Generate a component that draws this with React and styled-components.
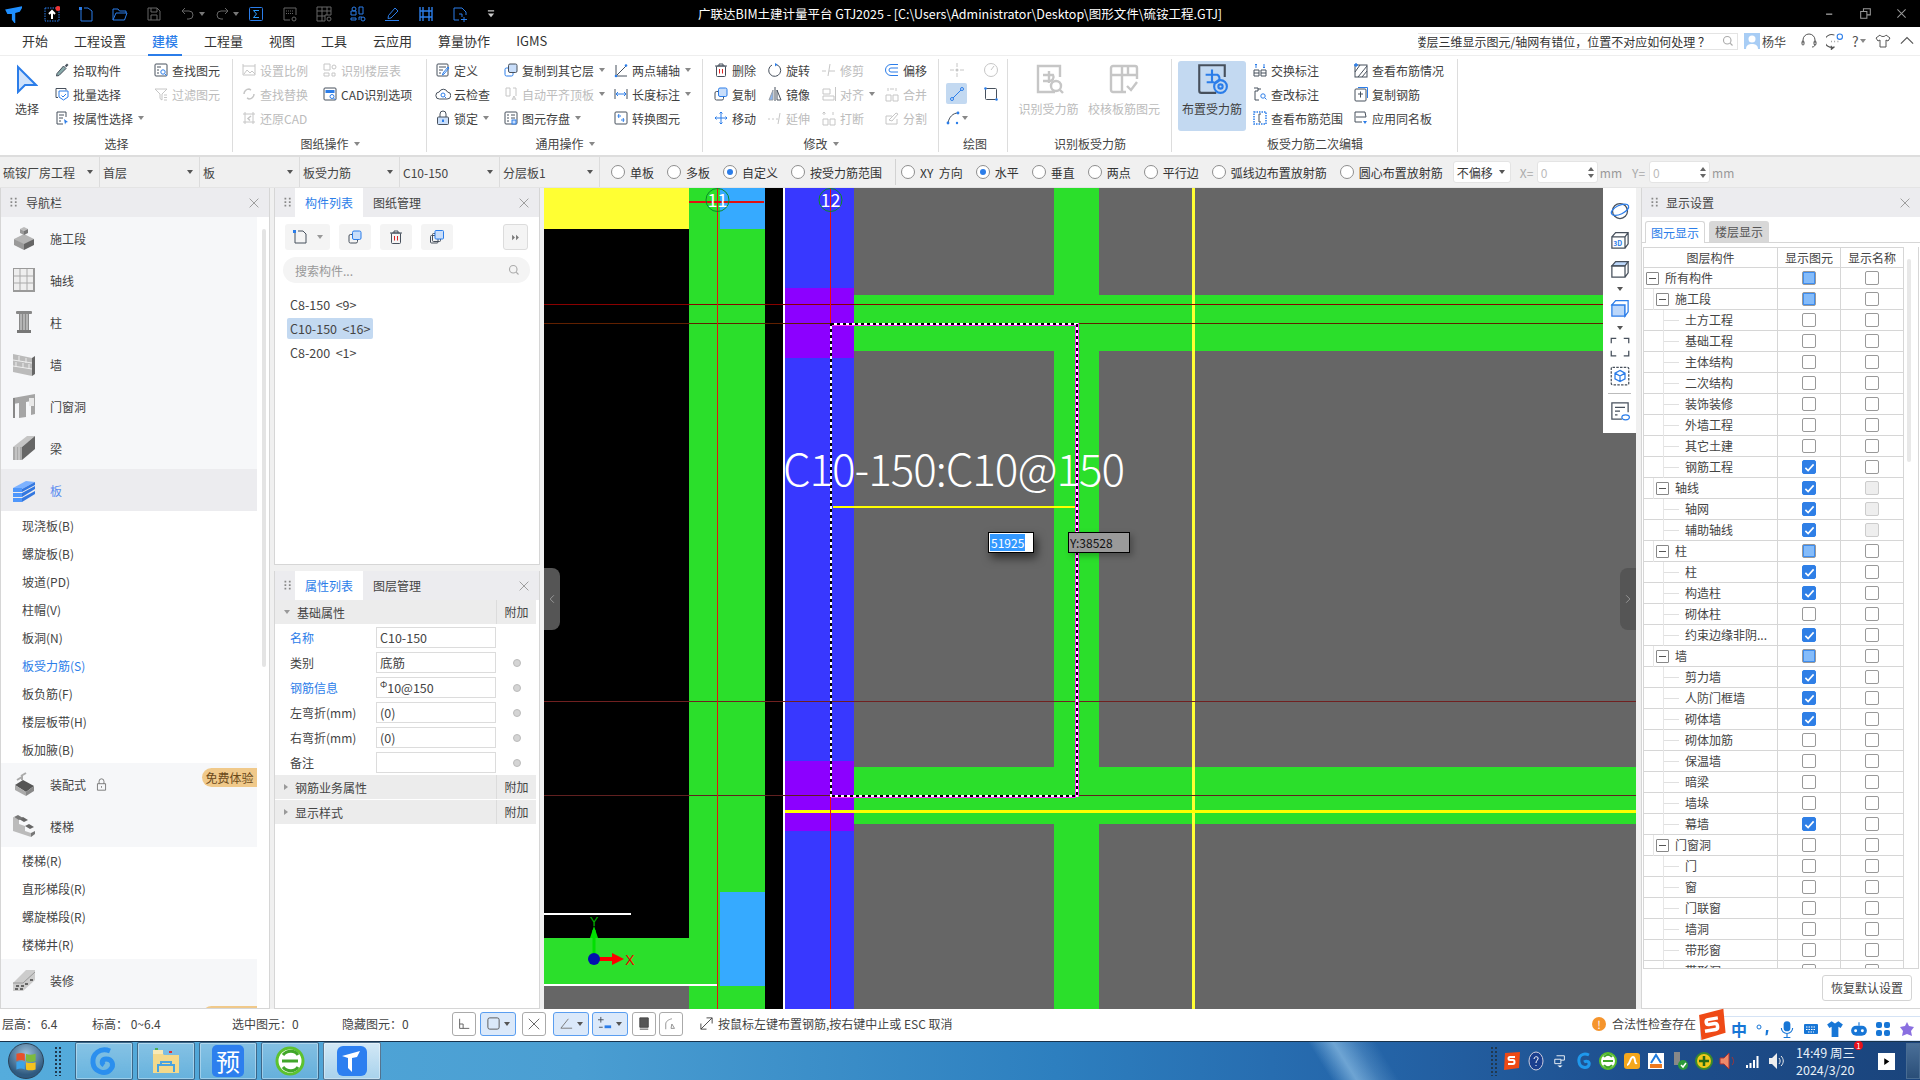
import React from "react";
import styled, { createGlobalStyle } from "styled-components";

const DK = "#47505c";
const BL = "#2b7de9";
const LB = "#c9defa";
const GR = "#c6c6c6";

const Global = createGlobalStyle`
  html, body { margin: 0; padding: 0; background: #f0f0f0; }
  body { font-family: "Noto Sans CJK SC", "Liberation Sans", sans-serif; font-size: 12px; color: #3a3a3a; }
  * { box-sizing: border-box; }
`;

// ---------- icons ----------
const icons = {
  pick: <><path d="M13 1.5l1.5 1.5-2.2 2.2-1.5-1.5z" fill={DK} /><path d="M9.5 4l2.5 2.5L5 13.5l-2.5.5.5-2.5z" fill="#8aa" stroke={DK} /></>,
  batch: <><path d="M2 2.5h10v2M2 2.5v9h2" stroke={DK} /><path d="M5 5h9v6l-4.5 3L5 11z" stroke={BL} /><path d="M7.5 9.5l1.5 1.5 3-3" stroke={BL} /></>,
  attr: <><path d="M12 7V2H3v12h6" stroke={DK} /><path d="M5 5h5M5 8h4M5 11h2" stroke={DK} /><path d="M10 9l4 3-2 .5-1 2z" fill={BL} /></>,
  find: <><rect x="2" y="2" width="12" height="12" rx="1" stroke={DK} /><path d="M4 5h4M4 8h2M4 11h2" stroke={DK} /><circle cx="10" cy="10" r="2.2" stroke={BL} /><path d="M12 12l2 2" stroke={BL} /></>,
  filter: <path d="M2 3h12L9 8v6l-2-1.5V8zM11 9h3M11 11.5h3M11 14h3" stroke={GR} />,
  scale: <><path d="M2 4h12v9H2z" stroke={GR} /><path d="M3 12l3-4 3 3 2-2 3 3" stroke={GR} /><path d="M2 2v2M14 2v2" stroke={GR} /></>,
  floorTbl: <><path d="M2 8V2h6v6zM2 14v-3h5v3zM10 14v-3h3v3z" stroke={GR} /><circle cx="12" cy="5" r="2" stroke={GR} /></>,
  replace: <><path d="M3 8a5 5 0 0 1 5-5l2 1M13 8a5 5 0 0 1-5 5l-2-1" stroke={GR} strokeWidth="1.5" /></>,
  cadOpt: <><rect x="2" y="2" width="12" height="12" rx="1" stroke={DK} /><rect x="3.5" y="4" width="9" height="3" fill={BL} /><circle cx="10" cy="10.5" r="2" stroke={BL} /><path d="M11.5 12l2 2" stroke={BL} /></>,
  restore: <><path d="M2 4h12M2 12h12M4 2v12M12 2v12" stroke={GR} /><path d="M10 6L7 8.5l2 2" stroke={GR} strokeWidth="1.5" /></>,
  define: <><rect x="2" y="2" width="11" height="12" rx="1" stroke={DK} /><path d="M4 5h7M4 8h4M4 11h2" stroke={DK} /><path d="M14 6l-5 6-1.500 1 .5-2 5-6z" stroke={BL} /></>,
  cloud: <><path d="M4.500 13a3.500 3.500 0 0 1-.3-7A4.500 4.500 0 0 1 12.500 6a3.500 3.500 0 0 1-.5 7z" stroke={DK} /><circle cx="8" cy="9" r="2" stroke={BL} /><path d="M9.500 10.500l1.500 1.500" stroke={BL} /></>,
  lock: <><path d="M5 7V4a3 3 0 0 1 6 0v3" stroke={DK} /><rect x="2.500" y="7" width="11" height="7.500" rx="1" fill={LB} stroke={DK} /><path d="M8 9.500v2.500" stroke={BL} strokeWidth="2" /></>,
  copyLayer: <><rect x="2" y="6" width="8" height="8" rx="1.500" stroke={BL} /><rect x="5.500" y="2" width="8.500" height="8.500" rx="1.500" fill={LB} stroke={DK} /></>,
  align: <><path d="M3 2h4v8H3zM10 2h3v8" stroke={GR} /><path d="M9 14l2-4 2 4M10 13h2" stroke={GR} /></>,
  store: <><rect x="2" y="2" width="12" height="12" rx="1" stroke={DK} /><path d="M4 5h2M8 5h4M4 8h2M8 8h4M4 11h2" stroke={DK} /><rect x="9" y="10" width="4" height="4" fill={LB} stroke={BL} /></>,
  axis2: <><path d="M3 3v11h11" stroke={DK} /><path d="M3 14L14 3" stroke={DK} /><circle cx="13" cy="3.500" r="1.300" fill={BL} /><circle cx="3" cy="14" r="1.300" fill={BL} /></>,
  dim: <><path d="M2 3v10M14 3v10" stroke={DK} /><path d="M3 8h10M5 6l-2 2 2 2M11 6l2 2-2 2" stroke={BL} /></>,
  convert: <><rect x="2" y="2" width="12" height="12" rx="1" stroke={DK} /><path d="M5 6h3M8 10h3M6 4l-1 2 1 2M10 8l1 2-1 2" stroke={BL} /></>,
  del: <><path d="M2 4h12M6 4V2h4v2" stroke={DK} /><rect x="3.500" y="4" width="9" height="10.500" rx="1" stroke={DK} /><path d="M6.500 7v4.500M9.500 7v4.500" stroke="#d22" /></>,
  copy: <><rect x="2" y="5.500" width="8.500" height="8.500" rx="1.500" stroke={DK} /><rect x="5.500" y="2" width="8.500" height="8.500" rx="1.500" fill={LB} stroke={BL} /></>,
  move: <path d="M8 2v12M2 8h12M8 2L6.500 3.500M8 2l1.500 1.500M8 14l-1.500-1.500M8 14l1.500-1.500M2 8l1.500-1.500M2 8l1.500 1.500M14 8l-1.500-1.500M14 8l-1.500 1.500" stroke={BL} />,
  rotate: <><path d="M9 2.500A6 6 0 1 1 5 3" stroke={DK} /><path d="M8 1l2.500 1.500L8 4.500z" fill={BL} /></>,
  mirror: <><path d="M8 1v14" stroke={DK} /><path d="M6 4L2 14h4z" fill={BL} opacity=".55" stroke={DK} /><path d="M10 4l4 10h-4z" stroke={DK} /></>,
  extend: <path d="M1 9h2M5 9h2M9 9h2M13 3l-2 11" stroke={GR} />,
  trim: <path d="M1 9h4M8 9h6M9 2L7 14" stroke={GR} />,
  alignR: <><path d="M2 3h7v5H2zM2 10h11v4H2z" stroke={GR} /><path d="M14.500 1v14" stroke={GR} /></>,
  brk: <><path d="M2 15V9h5v6zM9 15V9h5v6z" stroke={GR} /><path d="M3 2v3M1.500 3.500L3 2l1.500 1.500M12 2v3" stroke={GR} /></>,
  offset: <path d="M14 2.500H7a5.500 5.500 0 0 0 0 11h7M14 6H7a2 2 0 0 0 0 4h7" stroke={BL} />,
  merge: <><path d="M2 15V9h5v6zM9 15V9h5v6z" stroke={GR} /><path d="M4 2v3M12 2v3M6 3h4" stroke={GR} /></>,
  split: <><path d="M13 9v5H2V6h6" stroke={GR} /><path d="M5 10l7-7 2 1-6 7z" stroke={GR} /></>,
  point: <><path d="M8 1v4M8 11v4M1 8h4M11 8h4" stroke={GR} /><circle cx="8" cy="8" r="1.500" fill={GR} /></>,
  measure: <><circle cx="8" cy="8" r="6.500" stroke={GR} /><path d="M8 8l3-4" stroke={GR} /></>,
  line: <><path d="M3 13L13 3" stroke={BL} /><circle cx="13" cy="3" r="1.500" fill={LB} stroke={BL} /><circle cx="3" cy="13" r="1.500" fill={LB} stroke={BL} /></>,
  rect: <><rect x="2.500" y="2.500" width="11" height="11" rx="1" stroke={DK} /><circle cx="2.500" cy="2.500" r="1.300" fill={BL} /><circle cx="13.500" cy="13.500" r="1.300" fill={BL} /></>,
  arc: <><path d="M3 13C4 7 8 3 13 3" stroke={DK} /><circle cx="13" cy="3" r="1.400" fill={BL} /><circle cx="3" cy="13" r="1.400" fill={BL} /><circle cx="12" cy="13" r="1.200" fill={BL} /></>,
  exch: <><path d="M2 8h5v6H2zM9 8h5v6H9zM2 11h5M9 11h5" stroke={DK} /><path d="M4 2v4M3 3l1-1 1 1M12 2v4M11 5l1 1 1-1" stroke={BL} /></>,
  chk: <><path d="M2 2h4v3H3v9h4M6 3h3" stroke={DK} /><circle cx="11" cy="10" r="2.200" stroke={BL} /><path d="M13 12l1.500 1.500" stroke={BL} /></>,
  viewInfo: <><rect x="2" y="2" width="12" height="12" stroke={BL} strokeDasharray="1.500 1" strokeWidth="1.500" /><path d="M9 4H7v8h2" stroke={DK} /></>,
  view: <><rect x="2" y="3" width="12" height="12" stroke={DK} /><path d="M2 10l5-7M5 15L14 4M9 15l5-6" stroke={DK} /><path d="M3 1v4M1 3h4" stroke={BL} strokeWidth="1.300" /></>,
  copyRebar: <><rect x="2" y="3" width="11" height="12" rx="1" stroke={DK} /><path d="M5 1.500h9.500V12" stroke={BL} /><path d="M5 8h5M7.500 5.500v6" stroke={DK} /></>,
  apply: <><path d="M2 12V2h10l1 5H3" stroke={DK} /><path d="M2 12h7" stroke={DK} /><path d="M10 11h4l-2 3z" fill={BL} /></>,
};

const Svg = ({ vb = "0 0 16 16", s = 16, w, h, children, stroke = "none", fill = "none", sw = 1 }) => (
  <svg viewBox={vb} width={w || s} height={h || s} fill={fill} stroke={stroke} strokeWidth={sw} style={{ display: "block", flex: "none" }}>
    {children}
  </svg>
);

const Caret = styled.span`
  display: inline-block;
  flex: none;
  width: 0;
  height: 0;
  border-left: 3px solid transparent;
  border-right: 3px solid transparent;
  border-top: 4px solid ${(p) => p.$c || "#888"};
  margin-left: ${(p) => p.$ml ?? 5}px;
`;

const Grip = () => (
  <Svg s={14}>
    {[3, 7, 11].map((y) => (
      <React.Fragment key={y}>
        <rect x="4" y={y - 1} width="2" height="2" fill="#888" />
        <rect x="9" y={y - 1} width="2" height="2" fill="#888" />
      </React.Fragment>
    ))}
  </Svg>
);
const CloseX = () => (
  <Svg s={10} stroke="#999">
    <path d="M1 1l14 14M15 1L1 15" strokeWidth="1.500" />
  </Svg>
);

// ---------- title bar ----------
const Shell = styled.div`
  width: 1920px;
  height: 1080px;
  overflow: hidden;
  display: flex;
  flex-direction: column;
`;
const TitleBar = styled.div`
  height: 27px;
  flex: none;
  background: #000;
  color: #fff;
  display: grid;
  grid-template-columns: 698px 1fr auto;
  align-items: center;
  font-size: 12.500px;
`;
const Quick = styled.div`
  display: flex;
  align-items: center;
  padding-left: 4px;
`;
const QuickSlot = styled.div`
  width: 34px;
  display: flex;
  align-items: center;
  position: relative;
  &:first-child { width: 40px; }
`;
const WinBtns = styled.div`
  display: flex;
  gap: 25px;
  padding-right: 13px;
`;
const Qs = (p) => <Svg s={16} stroke={p.c} {...p} />;

const quickIcons = [
  <Svg s={18} key="logo" fill="#1f8fff"><path d="M1 4l16-3-3 5-4 1v10l-3-4V8L3 8z" /></Svg>,
  <Qs c={BL} key="up"><rect x="1" y="2" width="14" height="13" strokeDasharray="1.500 1" /><path d="M8 13V6M5 8l3-3 3 3" stroke="#fff" strokeWidth="2" /><circle cx="14" cy="2.500" r="2.500" fill="#e33" stroke="none" /></Qs>,
  <Qs c={BL} key="new"><path d="M3 4v11h11V5l-4-3H6" /><rect x="1" y="1" width="3" height="3" fill={BL} stroke="none" /></Qs>,
  <Qs c={BL} key="open"><path d="M1 14V3h5l1.500 2H14v2M1 14h11.500L15 7H4z" /></Qs>,
  <Qs c="#666" key="save"><path d="M2 2h9l3 3v9H2zM5 2v4h6V2M5 14V9h6v5" /></Qs>,
  <React.Fragment key="undo"><Qs c="#666"><path d="M5 2L2 5l3 3M2 5h7a4 4 0 0 1 0 8H7" /></Qs><Caret $c="#777" $ml={3} /></React.Fragment>,
  <React.Fragment key="redo"><Qs c="#666"><path d="M11 2l3 3-3 3M14 5H7a4 4 0 0 0 0 8h2" /></Qs><Caret $c="#777" $ml={3} /></React.Fragment>,
  <Qs c={BL} key="sum"><rect x="1.500" y="1.500" width="13" height="13" rx="1" /><path d="M11 4.500H5.500L8.500 8l-3 3.500H11" stroke="#2a9cff" /></Qs>,
  <Qs c="#666" key="q1"><path d="M2 14V2h12v7M2 14h6" /><path d="M4 5h8M4 7.500h8" strokeDasharray="1 1" /><circle cx="12" cy="13" r="2" /></Qs>,
  <Qs c="#666" key="q2"><path d="M1 1h14v8H9v6H1zM1 5h14M6 1v14M11 1v8M1 10h8" /><circle cx="13" cy="13" r="2" /></Qs>,
  <Qs c={BL} key="q3"><path d="M1 9V5h5v4zM1 14v-2h5v2zM9 14v-3h3" /><circle cx="4" cy="3" r="2" /><path d="M9 1h4v7H9z" /><circle cx="13" cy="13" r="2" /></Qs>,
  <Qs c={BL} key="q4"><path d="M11 2l3 3-7 7-3 .5.500-3zM1 14.500h14" /></Qs>,
  <Qs c={BL} key="q5"><path d="M2 1v14M14 1v14M5 1v14M11 1v14M2 5h12M2 11h12" strokeWidth="1.400" /></Qs>,
  <Qs c={BL} key="q6"><path d="M2 14V2h8l4 4v3M2 14h5M12 11v5M9 13.500h6M7 8h3v3" /></Qs>,
  <Svg w={10} h={10} key="more" fill="#ccc"><path d="M3 2h10v2H3zM3 7h10l-5 6z" /></Svg>,
];

// ---------- menu ----------
const MenuBar = styled.div`
  height: 28px;
  flex: none;
  background: #fff;
  display: flex;
  align-items: center;
  padding-left: 22px;
  gap: 26px;
  font-size: 13px;
`;
const MenuItem = styled.div`
  position: relative;
  line-height: 28px;
  color: ${(p) => (p.$on ? BL : "#333")};
  font-weight: ${(p) => (p.$on ? 500 : 400)};
  &::after {
    content: "";
    position: absolute;
    left: -4px;
    right: -4px;
    bottom: -1px;
    height: 2px;
    background: ${(p) => (p.$on ? BL : "transparent")};
  }
`;
const AskWrap = styled.div`
  margin-left: auto;
  display: flex;
  align-items: center;
  height: 28px;
  padding-right: 6px;
`;
const AskBox = styled.div`
  width: 320px;
  height: 17px;
  margin-right: 6px;
  background: #fff;
  border: 1px solid #e4e4e4;
  border-left: none;
  display: flex;
  align-items: center;
  padding-right: 3px;
  font-size: 12px;
  color: #333;
`;
const AskText = styled.div`
  flex: 1;
  overflow: hidden;
  white-space: nowrap;
  display: flex;
  justify-content: flex-end;
  padding-right: 12px;
`;
const Avatar = styled.div`
  width: 16px;
  height: 16px;
  background: #a8cdf5;
  margin-right: 2px;
`;
const UserName = styled.span`
  font-size: 12px;
  margin-right: 15px;
  color: #444;
`;
const HelpIcons = styled.div`
  display: flex;
  align-items: center;
  gap: 9px;
`;

// ---------- ribbon ----------
const Ribbon = styled.div`
  height: 102px;
  flex: none;
  background: #fff;
  border-top: 1px solid #eee;
  border-bottom: 2px solid #ddd;
  display: flex;
`;
const Group = styled.div`
  width: ${(p) => p.$w}px;
  flex: none;
  display: flex;
  flex-direction: column;
  position: relative;
  padding-top: 2px;
  &::after {
    content: "";
    position: absolute;
    right: 0;
    top: 3px;
    bottom: 3px;
    width: 1px;
    background: #ddd;
  }
`;
const GroupBody = styled.div`
  height: 72px;
  display: flex;
  padding-left: ${(p) => p.$pl || 0}px;
`;
const GroupLabel = styled.div`
  margin-top: 4px;
  height: 20px;
  line-height: 20px;
  padding-left: ${(p) => p.$pl || 0}px;
  display: flex;
  align-items: center;
  justify-content: center;
  color: #444;
`;
const Col = styled.div`
  width: ${(p) => p.$w}px;
  flex: none;
`;
const Item = styled.div`
  height: 24px;
  display: flex;
  align-items: center;
  gap: 3px;
  white-space: nowrap;
  color: ${(p) => (p.$off ? "#bcbcbc" : "#3f3f3f")};
`;
const BigBtn = styled.div`
  width: ${(p) => p.$w}px;
  height: 70px;
  margin-top: 3px;
  margin-right: ${(p) => p.$mr || 0}px;
  flex: none;
  display: flex;
  flex-direction: column;
  align-items: center;
  padding-top: 1px;
  white-space: nowrap;
  border-radius: 3px;
  background: ${(p) => (p.$on ? "#c3d9f1" : "transparent")};
  color: ${(p) => (p.$off ? "#bcbcbc" : "#3f3f3f")};
`;
const BigIcon = styled.div`
  height: 34px;
  display: flex;
  align-items: center;
  margin-bottom: 4px;
`;
const DrawGrid = styled.div`
  display: grid;
  grid-template-columns: 34px 34px;
  grid-auto-rows: 24px;
  padding-left: 7px;
`;
const DrawCell = styled.div`
  width: 21px;
  height: 21px;
  margin-top: 1px;
  display: flex;
  align-items: center;
  justify-content: center;
  border-radius: 2px;
  background: ${(p) => (p.$on ? "#c3d9f1" : "transparent")};
`;

const Ri = ({ i, t, off, m }) => (
  <Item $off={off}>
    <Svg>{icons[i]}</Svg>
    {t}
    {m && <Caret $ml={2} />}
  </Item>
);

// ---------- option bar ----------
const OptionBar = styled.div`
  height: 31px;
  flex: none;
  background: #f0f0f0;
  display: flex;
  align-items: center;
  border-bottom: 1px solid #e4e4e4;
`;
const SelCell = styled.div`
  width: 100px;
  height: 30px;
  flex: none;
  display: flex;
  align-items: center;
  justify-content: space-between;
  padding: 0 6px 0 3px;
  border-right: 1px solid #dcdcdc;
  color: #444;
`;
const OptGap = styled.span`
  width: 11px;
  flex: none;
`;
const RadioWrap = styled.div`
  display: flex;
  align-items: center;
  gap: 5px;
  margin-right: 13px;
  white-space: pre;
  color: #333;
`;
const RadioDot = styled.span`
  width: 14px;
  height: 14px;
  border-radius: 50%;
  border: 1px solid #8e8e8e;
  background: #fff;
  display: flex;
  align-items: center;
  justify-content: center;
  &::after {
    content: "";
    width: 6px;
    height: 6px;
    border-radius: 50%;
    background: ${(p) => (p.$on ? BL : "transparent")};
  }
`;
const VSep = styled.div`
  width: 1px;
  height: 26px;
  background: #d2d2d2;
  margin-right: 5px;
`;
const OffsetSel = styled.div`
  width: 58px;
  height: 22px;
  background: #fff;
  border-radius: 3px;
  border: 1px solid #e4e4e4;
  display: flex;
  align-items: center;
  justify-content: space-between;
  padding: 0 5px 0 3px;
  margin: 0 9px 0 -3px;
`;
const CoordLabel = styled.span`
  color: #aaa;
  width: 17px;
`;
const CoordInput = styled.div`
  width: 61px;
  height: 22px;
  background: #fff;
  border: 1px solid #e4e4e4;
  border-radius: 3px;
  display: flex;
  align-items: center;
  justify-content: space-between;
  padding: 0 3px;
  color: #bbb;
`;
const Unit = styled.span`
  color: #999;
  margin: 0 10px 0 2px;
`;
const Spin = styled.div`
  display: flex;
  flex-direction: column;
  gap: 3px;
`;
const SpinUp = styled.span`
  width: 0;
  height: 0;
  border-left: 3px solid transparent;
  border-right: 3px solid transparent;
  border-bottom: 4px solid #666;
`;

// ---------- main area ----------
const Main = styled.div`
  height: 821px;
  flex: none;
  display: flex;
  background: #f0f0f0;
`;
const NavPanel = styled.div`
  width: 270px;
  flex: none;
  background: #fff;
  border: 1px solid #d6d6d6;
  border-top: none;
  display: flex;
  flex-direction: column;
  overflow: hidden;
  position: relative;
`;
const PanelHead = styled.div`
  height: 29px;
  flex: none;
  background: #ececef;
  display: flex;
  align-items: center;
  padding: 0 10px 0 6px;
  gap: ${(p) => p.$gap ?? 5}px;
  color: #444;
`;
const PanelClose = styled.div`
  margin-left: auto;
`;
const NavRow = styled.div`
  width: 256px;
  height: 42px;
  flex: none;
  display: flex;
  align-items: center;
  gap: 14px;
  padding-left: 11px;
  position: relative;
  background: ${(p) => (p.$on ? "#ececef" : "#f6f7f9")};
  color: ${(p) => (p.$on ? "#5a8df0" : "#444")};
`;
const NavLock = styled.span`
  margin-left: -5px;
`;
const NavSub = styled.div`
  height: 28px;
  flex: none;
  line-height: 28px;
  padding-left: 21px;
  margin-top: ${(p) => (p.$first ? 1 : 0)}px;
  margin-bottom: ${(p) => (p.$last ? -1 : 0)}px;
  color: ${(p) => (p.$on ? BL : "#444")};
`;
const FreeBadge = styled.div`
  position: absolute;
  right: 0;
  top: ${(p) => p.$top ?? 5}px;
  width: 55px;
  height: 19px;
  line-height: 19px;
  text-align: center;
  border-radius: 10px 0 0 10px;
  background: #f0c98a;
  color: #6b4a1a;
  font-size: 12px;
`;
const NavScroll = styled.div`
  position: absolute;
  right: 3px;
  top: 41px;
  width: 4px;
  height: 438px;
  border-radius: 2px;
  background: #e4e4e4;
`;
const MidCol = styled.div`
  width: 266px;
  margin-left: 4px;
  flex: none;
  display: flex;
  flex-direction: column;
  gap: 6px;
`;
const MidPanel = styled.div`
  flex: ${(p) => (p.$h ? "none" : 1)};
  height: ${(p) => (p.$h ? `${p.$h}px` : "auto")};
  background: #fff;
  border: 1px solid #d6d6d6;
  border-top: none;
  display: flex;
  flex-direction: column;
`;
const TabHead = styled.div`
  height: 29px;
  flex: none;
  background: #ececef;
  display: flex;
  align-items: center;
  padding-left: 6px;
  padding-right: 10px;
`;
const PanelTab = styled.div`
  height: 29px;
  width: 68px;
  text-align: center;
  line-height: 29px;
  background: ${(p) => (p.$on ? "#fff" : "transparent")};
  color: ${(p) => (p.$on ? BL : "#444")};
`;
const Tools = styled.div`
  display: flex;
  gap: 9px;
  padding: 7px 0 0 10px;
`;
const ToolBtn = styled.div`
  width: ${(p) => p.$w || 32}px;
  height: 26px;
  background: #f4f4f4;
  border-radius: 3px;
  display: flex;
  align-items: center;
  justify-content: center;
  gap: 6px;
  margin-left: ${(p) => p.$ml || 0}px;
  border: ${(p) => (p.$bd ? "1px solid #dcdcdc" : "none")};
`;
const SearchBox = styled.div`
  margin: 7px 9px 0 8px;
  height: 26px;
  border-radius: 13px;
  background: #f4f4f4;
  display: flex;
  align-items: center;
  justify-content: space-between;
  padding: 0 10px 0 12px;
  color: #999;
`;
const CompList = styled.div`
  display: flex;
  flex-direction: column;
  align-items: flex-start;
  padding: 11px 0 0 12px;
  gap: 3px;
`;
const CompItem = styled.div`
  height: 21px;
  line-height: 21px;
  padding: 0 3px;
  border-radius: 2px;
  font-size: 12.500px;
  white-space: pre;
  background: ${(p) => (p.$on ? "#c3d9f1" : "transparent")};
  color: #444;
`;
const SecRow = styled.div`
  height: 24px;
  margin-bottom: 1px;
  margin-right: 3px;
  background: #ececec;
  display: flex;
  align-items: center;
  padding-left: 9px;
  gap: 7px;
  color: #444;
`;
const SecTri = styled.span`
  width: 0;
  height: 0;
  flex: none;
  ${(p) =>
    p.$open
      ? "border-left: 3px solid transparent; border-right: 3px solid transparent; border-top: 4px solid #999;"
      : "border-top: 3px solid transparent; border-bottom: 3px solid transparent; border-left: 4px solid #999;"}
`;
const SecAdd = styled.div`
  margin-left: auto;
  width: 40px;
  height: 24px;
  line-height: 24px;
  text-align: center;
  border-left: 1px solid #dcdcdc;
`;
const PropGrid = styled.div`
  padding: 2px 0 2px 15px;
  display: flex;
  flex-direction: column;
  gap: 4px;
`;
const PropRow = styled.div`
  display: grid;
  grid-template-columns: 86px 120px 21px 8px;
  align-items: center;
  height: 21px;
  color: ${(p) => (p.$blue ? BL : "#444")};
`;
const PropInput = styled.div`
  height: 21px;
  line-height: 19px;
  border: 1px solid #dcdcdc;
  padding-left: 3px;
  color: #444;
  font-size: 12.500px;
  white-space: nowrap;
`;
const PropDot = styled.span`
  grid-column: 4;
  width: 8px;
  height: 8px;
  border-radius: 50%;
  background: #d4d4d4;
  border: 1px solid #bbb;
  margin-left: -4px;
`;
const Grade = styled.sup`
  font-size: 9px;
  line-height: 0;
`;

// ---------- canvas ----------
const Canvas = styled.div`
  width: 1092px;
  margin-left: 4px;
  flex: none;
  position: relative;
  background: #666;
  overflow: hidden;
`;
const ViewBar = styled.div`
  position: absolute;
  right: 0;
  top: 0;
  width: 33px;
  height: 245px;
  background: #fff;
  display: flex;
  flex-direction: column;
  align-items: center;
  gap: 9px;
  padding-top: 13px;
`;
const ViewArrow = styled.span`
  flex: none;
  height: 10px;
  margin: -4px 0 -5px;
  display: flex;
  align-items: center;
`;
const ViewRule = styled.div`
  width: 23px;
  height: 1px;
  flex: none;
  background: #bbb;
  margin: -2px 0;
`;
const Handle = styled.div`
  position: absolute;
  top: 380px;
  ${(p) => (p.$right ? "right: 0;" : "left: 0;")}
  width: 16px;
  height: 62px;
  background: #555;
  color: #999;
  display: flex;
  align-items: center;
  justify-content: center;
  border-radius: ${(p) => (p.$right ? "8px 0 0 8px" : "0 8px 8px 0")};
`;
const CoordBox = styled.div`
  position: absolute;
  top: 344px;
  left: ${(p) => p.$x}px;
  width: ${(p) => p.$w}px;
  height: 21px;
  border: 1px solid #000;
  background: ${(p) => (p.$sel ? "#fff" : "#9a9a9a")};
  padding: 1px;
  font-size: 12px;
  line-height: 17px;
  color: #111;
  white-space: nowrap;
  box-shadow: ${(p) => (p.$sel ? "3px 5px 10px rgba(0,0,0,.55)" : "3px 3px 6px rgba(0,0,0,.25)")};
`;
const CoordSel = styled.span`
  display: block;
  width: 35px;
  height: 17px;
  background: #3399ff;
  color: #fff;
  padding-left: 1px;
`;

const G = "#2bdf2b";
const CanvasDrawing = () => (
  <svg viewBox="544 188 1092 821" width="1092" height="821" style={{ display: "block" }}>
    <rect x="544" y="188" width="145" height="41" fill="#ffff33" />
    <rect x="544" y="229" width="145" height="709" fill="#000" />
    <rect x="544" y="938" width="145" height="47" fill={G} />
    <rect x="689" y="188" width="76" height="821" fill={G} />
    <rect x="720" y="188" width="45" height="41" fill="#36aaff" />
    <rect x="720" y="892" width="45" height="94" fill="#36aaff" />
    <rect x="765" y="188" width="18" height="821" fill="#000" />
    <rect x="783" y="188" width="2" height="821" fill="#fff" />
    <rect x="785" y="188" width="69" height="821" fill="#3838ff" />
    <rect x="785" y="288" width="69" height="70" fill="#8c00ff" />
    <rect x="785" y="761" width="69" height="70" fill="#8c00ff" />
    <rect x="854" y="295" width="782" height="56" fill={G} />
    <rect x="854" y="767" width="782" height="57" fill={G} />
    <rect x="1054" y="188" width="45" height="821" fill={G} />
    <rect x="1192" y="188" width="3" height="821" fill="#ffff33" />
    <rect x="785" y="810" width="851" height="3" fill="#ffff00" />
    <rect x="833" y="506" width="242" height="2" fill="#ffff00" />
    <rect x="544" y="913" width="87" height="2" fill="#fff" />
    <rect x="544" y="984" width="174" height="2" fill="#fff" />
    <rect x="689" y="201" width="75" height="2" fill="#e01010" />
    <g stroke="#8a0000" strokeWidth="1">
      <path d="M544 304.500H1636" />
      <path d="M544 323.500H1636" stroke="#602000" />
      <path d="M544 701.500H1636" stroke="#702020" />
      <path d="M544 795.500H1636" stroke="#602020" />
    </g>
    <path d="M717.500 188V1009M830.500 188V1009" stroke="#e81010" />
    <rect x="831" y="324" width="246" height="472" fill="none" stroke="#fff" strokeWidth="2" />
    <rect x="831" y="324" width="246" height="472" fill="none" stroke="#000" strokeWidth="2" strokeDasharray="3 3" />
    <path d="M832 325.500H1075.500V797.500H831" fill="none" stroke="#ff30ff" />
    <path d="M1078.500 323V797" fill="none" stroke="#ff30ff" />
    <g fill="none" stroke="#0a8a2a">
      <circle cx="717.500" cy="200" r="11.500" />
      <circle cx="830.500" cy="200" r="11.500" />
    </g>
    <g fill="#fff" fontSize="18" fontFamily="Noto Sans CJK SC, sans-serif" textAnchor="middle">
      <text x="717.500" y="207">11</text>
      <text x="830.500" y="207">12</text>
    </g>
    <text x="783" y="486" fill="#fff" fontSize="44" fontWeight="300" fontFamily="Noto Sans CJK SC, sans-serif" textLength="342">C10-150:C10@150</text>
    <path d="M594 930V955" stroke="#00e000" strokeWidth="3" />
    <path d="M594 926l-4 12h8z" fill="#00e000" />
    <text x="594" y="926" fill="#00b000" fontSize="13" textAnchor="middle" fontFamily="Liberation Sans, sans-serif">Y</text>
    <path d="M598 959H612" stroke="#f00" strokeWidth="4" />
    <path d="M612 953l12 6-12 6z" fill="#f00" />
    <text x="630" y="965" fill="#e00" fontSize="14" textAnchor="middle" fontFamily="Liberation Sans, sans-serif">X</text>
    <circle cx="594" cy="959" r="6" fill="#0010b0" />
  </svg>
);

const viewIcons = [
  <Svg s={20} key="orb" stroke={DK}><ellipse cx="8" cy="8" rx="6" ry="6" /><ellipse cx="8" cy="7" rx="7.500" ry="3.500" transform="rotate(-25 8 7)" stroke={BL} /></Svg>,
  <Svg s={20} key="3d" stroke={DK}><path d="M1.500 5.500h10.500v9H1.500zM1.500 5.500l3-3.500h10v9l-2.500 3.500M12 5.500l2.500-3.500" /><text x="2.500" y="12.500" fontSize="5.500" fontWeight="700" fill={BL} stroke="none">3D</text></Svg>,
  <Svg s={20} key="c1" stroke={DK}><path d="M1.500 5.500l3-3.500h10L12 5.500z" fill="#bcd7fa" /><path d="M1.500 5.500H12v9H1.500zM12 14.500l2.500-3.500V2" /></Svg>,
  "a",
  <Svg s={20} key="c2" stroke={DK}><path d="M1.500 5.500H12v9H1.500z" fill="#bcd7fa" stroke={BL} /><path d="M1.500 5.500l3-3.500h10v9L12 14.500V5.500z" fill="#fff" stroke={BL} /></Svg>,
  "a",
  <Svg s={20} key="fr" stroke={DK}><path d="M1 5V1h4M11 1h4v4M15 11v4h-4M5 15H1v-4" /></Svg>,
  <Svg s={20} key="box" stroke={DK}><rect x="1" y="1" width="14" height="14" rx="1" strokeDasharray="2 1" /><path d="M8 3.500l4 2.200v4.600l-4 2.200-4-2.200V5.700zM4 5.700l4 2.300 4-2.300M8 8v4.500" stroke={BL} /></Svg>,
  "r",
  <Svg s={20} key="list" stroke={DK}><path d="M14.500 9V1.500h-13v13h8" /><path d="M4 5h8M4 8h4M4 11h2" /><ellipse cx="12.500" cy="13" rx="3" ry="2" stroke={BL} /></Svg>,
];

// ---------- right panel ----------
const RightPanel = styled.div`
  width: 279px;
  margin-left: 5px;
  flex: none;
  background: #fff;
  border: 1px solid #d6d6d6;
  border-top: none;
  border-right: none;
  display: flex;
  flex-direction: column;
`;
const ShowTabs = styled.div`
  display: flex;
  gap: 4px;
  height: 26px;
  padding: 3px 0 0 3px;
  border-bottom: 1px solid #d6d6d6;
`;
const ShowTab = styled.div`
  width: 60px;
  text-align: center;
  margin-top: ${(p) => (p.$on ? 0 : 1)}px;
  line-height: 22px;
  color: ${(p) => (p.$on ? BL : "#555")};
  background: ${(p) => (p.$on ? "#fff" : "#d8d8d8")};
  border: ${(p) => (p.$on ? "1px solid #d6d6d6" : "none")};
  border-bottom: none;
  border-radius: 3px 3px 0 0;
  position: relative;
  top: ${(p) => (p.$on ? 1 : 0)}px;
`;
const TreeBox = styled.div`
  margin: 4px 1px 0 1px;
  height: 722px;
  overflow: hidden;
  border: 1px solid #d6d6d6;
  border-top: none;
  position: relative;
`;
const TreeRow = styled.div`
  display: grid;
  grid-template-columns: 134px 63px 63px;
  height: 21px;
  color: #444;
`;
const TreeHead = styled.div`
  height: 21px;
  line-height: 20px;
  text-align: center;
  border-right: 1px solid #d6d6d6;
  border-bottom: 1px solid #d6d6d6;
  border-top: 1px solid #d6d6d6;
`;
const NameCell = styled.div`
  height: 21px;
  line-height: 20px;
  border-right: 1px solid #d6d6d6;
  border-bottom: 1px solid #d6d6d6;
  position: relative;
  padding-left: ${(p) => [21, 31, 41][p.$lv]}px;
  white-space: nowrap;
  &::before {
    content: "";
    display: ${(p) => (p.$lv === 2 ? "block" : "none")};
    position: absolute;
    left: 19px;
    top: 10px;
    width: 16px;
    height: 1px;
    background: #e0e0e0;
  }
  &::after {
    content: "";
    display: ${(p) => (p.$lv === 0 ? "none" : "block")};
    position: absolute;
    left: ${(p) => (p.$lv === 2 ? 19 : 9)}px;
    top: 0;
    bottom: -1px;
    width: 1px;
    background: #e6e6e6;
  }
`;
const Expander = styled.span`
  position: absolute;
  left: ${(p) => (p.$lv === 0 ? 2 : 12)}px;
  top: 4px;
  width: 13px;
  height: 13px;
  background: #fff;
  border: 1px solid #888;
  border-radius: 1px;
  z-index: 1;
  display: flex;
  align-items: center;
  justify-content: center;
  &::after {
    content: "";
    width: 7px;
    height: 1px;
    background: #555;
  }
`;
const BoxCell = styled.div`
  height: 21px;
  border-right: 1px solid #d6d6d6;
  border-bottom: 1px solid #d6d6d6;
  display: flex;
  align-items: center;
  justify-content: center;
`;
const Check = styled.span`
  width: 14px;
  height: 14px;
  border-radius: 2px;
  display: flex;
  align-items: center;
  justify-content: center;
  background: ${(p) => ({ on: "#2f7fe6", dis: "#eee", part: "#fff", off: "#fff" }[p.$s])};
  border: 1px solid ${(p) => ({ on: "#2f7fe6", dis: "#ccc", part: "#999", off: "#999" }[p.$s])};
  &::after {
    content: "";
    display: ${(p) => (p.$s === "part" ? "block" : "none")};
    width: 10px;
    height: 10px;
    background: #85bcfa;
    border: 1px solid #3f8ef0;
  }
`;
const TreeScroll = styled.div`
  position: absolute;
  left: 263px;
  top: 12px;
  width: 4px;
  height: 203px;
  border-radius: 2px;
  background: #e8e8e8;
`;
const ResetRow = styled.div`
  display: flex;
  justify-content: flex-end;
  padding: 6px 8px 0 0;
`;
const ResetBtn = styled.div`
  width: 90px;
  height: 26px;
  line-height: 24px;
  text-align: center;
  background: #fff;
  border: 1px solid #d4d4d4;
  border-radius: 3px;
  color: #444;
`;

// ---------- status bar ----------
const StatusBar = styled.div`
  height: 32px;
  flex: none;
  background: #fff;
  display: flex;
  align-items: center;
  padding-bottom: 3px;
  position: relative;
  color: #444;
`;
const StatText = styled.span`
  width: ${(p) => p.$w}px;
  flex: none;
  padding-left: ${(p) => p.$pl || 0}px;
  white-space: nowrap;
`;
const StatBtn = styled.div`
  width: ${(p) => p.$w || 24}px;
  height: 24px;
  margin-right: ${(p) => p.$mr ?? 6}px;
  flex: none;
  display: flex;
  align-items: center;
  justify-content: center;
  gap: 3px;
  border-radius: 3px;
  border: 1px solid ${(p) => (p.$on ? "#5a9ef0" : "#aaa")};
  background: ${(p) => (p.$on ? "#dbe9fa" : "#fff")};
`;
const Warn = styled.span`
  width: 14px;
  height: 14px;
  margin-left: auto;
  border-radius: 50%;
  background: #f5942c;
  color: #fff;
  font-size: 11px;
  line-height: 14px;
  text-align: center;
  margin-right: 6px;
`;
const CheckMsg = styled.span`
  width: 88px;
  flex: none;
`;
const ImeBar = styled.div`
  width: 220px;
  height: 25px;
  align-self: flex-end;
  margin-bottom: -3px;
  flex: none;
  background: #fff;
  border: 1px solid #d5e3f5;
  border-right: none;
  border-radius: 3px 0 0 3px;
  display: flex;
  align-items: center;
  padding-left: 29px;
  gap: 6px;
  color: #1776d6;
  position: relative;
`;
const ImeLogo = styled.div`
  position: absolute;
  left: -4px;
  top: -7px;
  transform: rotate(-10deg);
  z-index: 2;
`;
const ImeSlot = styled.div`
  width: 18px;
  flex: none;
  display: flex;
  justify-content: center;
  font-size: 16px;
  font-weight: 700;
  line-height: 18px;
`;

// ---------- taskbar ----------
const Taskbar = styled.div`
  height: 39px;
  flex: none;
  display: flex;
  align-items: center;
  border-top: 1px solid #18334d;
  background:
    linear-gradient(58deg, transparent 68.500%, rgba(170,215,245,.55) 69.800%, rgba(170,215,245,.2) 71%, transparent 72%),
    linear-gradient(90deg, #55acdc 0%, #4a9ed2 30%, #2d7fbf 55%, #2567ab 70%, #1e4f8e 85%, #1a447c 100%);
`;
const Orb = styled.div`
  width: 36px;
  height: 36px;
  margin-left: 8px;
  border-radius: 50%;
  flex: none;
  background: radial-gradient(circle at 50% 30%, #9cc0da, #2f5a80 70%);
  border: 1px solid #2a4258;
  display: flex;
  align-items: center;
  justify-content: center;
`;
const Dots = styled.div`
  width: 8px;
  height: 30px;
  margin: 0 ${(p) => p.$mr ?? 13}px 0 ${(p) => p.$ml ?? 10}px;
  flex: none;
  background-image: radial-gradient(#20384f .9px, transparent 1px);
  background-size: 4px 4px;
`;
const TaskBtn = styled.div`
  width: 58px;
  height: 38px;
  margin-right: 4px;
  flex: none;
  display: flex;
  align-items: center;
  justify-content: center;
  border: 1px solid rgba(30,60,90,.65);
  border-radius: 2px;
  background: ${(p) => (p.$on ? "linear-gradient(#d2e8f6, #a8d2ec)" : "linear-gradient(rgba(255,255,255,.3), rgba(255,255,255,.12))")};
  box-shadow: inset 0 0 0 1px rgba(255,255,255,.35);
`;
const PreSquare = styled.div`
  width: 32px;
  height: 32px;
  border-radius: 5px;
  background: #2d7fee;
  color: #fff;
  font-size: 24px;
  line-height: 32px;
  text-align: center;
`;
const Tray = styled.div`
  margin-left: auto;
  display: flex;
  align-items: center;
  height: 100%;
`;
const TraySlot = styled.div`
  width: 24px;
  flex: none;
  display: flex;
  justify-content: center;
`;
const Clock = styled.div`
  width: 82px;
  margin-left: 8px;
  color: #e8f0f8;
  font-size: 12.500px;
  line-height: 17px;
  position: relative;
  flex: none;
`;
const ClockBadge = styled.span`
  position: absolute;
  left: 58px;
  top: -3px;
  width: 9px;
  height: 9px;
  border-radius: 50%;
  background: #e8101a;
  color: #fff;
  font-size: 8px;
  line-height: 9px;
  text-align: center;
`;
const DeskBtn = styled.div`
  width: 17px;
  height: 17px;
  background: #fff;
  flex: none;
  display: flex;
  align-items: center;
  justify-content: center;
`;
const Peek = styled.div`
  width: 14px;
  height: 36px;
  margin-left: 11px;
  flex: none;
  border: 1px solid #496c92;
  background: linear-gradient(#4a6f98, #2a4e78);
`;

// ---------- data ----------
const navTop = [
  ["施工段", "seg"],
  ["轴线", "axis"],
  ["柱", "col"],
  ["墙", "wall"],
  ["门窗洞", "door"],
  ["梁", "beam"],
];
const navIcon = {
  seg: <><path d="M12 9l10 5-10 6-10-6z" fill="#b5b5b5" /><path d="M2 14v6l10 5v-6z" fill="#9a9a9a" /><path d="M22 14v6l-10 5v-6z" fill="#666" /><path d="M12 2l4 2-4 2-4-2z" fill="#bbb" /><path d="M8 4v4l4 2V6z" fill="#999" /><path d="M16 4v4l-4 2V6z" fill="#777" /></>,
  axis: <><rect x="1" y="1" width="22" height="24" fill="#9a9a9a" /><rect x="2" y="2" width="19" height="21" fill="#eee" /><path d="M8 2v21M15 2v21M2 9h19M2 16h19" stroke="#aaa" /></>,
  col: <><rect x="4" y="2" width="16" height="3" rx="1" fill="#888" /><rect x="7" y="5" width="10" height="16" fill="#8a8a8a" /><path d="M9 5v16M12 5v16M15 5v16" stroke="#ddd" /><rect x="5" y="21" width="14" height="3" fill="#777" /></>,
  wall: <><path d="M1 3l19 4v18L1 21z" fill="#bbb" /><path d="M20 7l3-2v18l-3 2z" fill="#666" /><path d="M1 9l19 3M1 15l19 3M7 5v5M14 7v5M4 11v5M11 12v5M17 13v5" stroke="#eee" /></>,
  door: <><path d="M1 5l22-4v20l-4 1V8l-5 1v15l-7 1V10l-6 1z" fill="#a5a5a5" /><rect x="1" y="5" width="2" height="20" fill="#888" /><rect x="17" y="5" width="5" height="8" fill="#e8e8e8" /></>,
  beam: <><path d="M1 12L15 1h8L10 12z" fill="#c5c5c5" /><path d="M10 12L23 1v13L10 25z" fill="#666" /><rect x="1" y="12" width="9" height="13" fill="#aaa" /><path d="M4 12v13M7 12v13" stroke="#ddd" /></>,
  slab: <><path d="M1 11L14 4l9 1L10 12z" fill="#7db2ff" /><path d="M1 11h9v4H1zM1 16h9v4H1zM1 21h9v4H1z" fill="#4f97fb" /><path d="M10 12l13-7v3L10 15zM10 16l13-7v3L10 20zM10 21l13-7v3L10 25z" fill="#3478e0" /></>,
  fab: <><path d="M3 14l8-5 11 6-8 6z" fill="#555" /><path d="M3 14v5l11 6v-4z" fill="#aaa" /><path d="M14 21v4l8-5v-5z" fill="#888" /><path d="M5 9l5-3v3M9 5l5-3" stroke="#aaa" strokeWidth="2" /></>,
  stair: <><path d="M1 4l6 2v5l6 2v5l6 2v4L1 18z" fill="#bbb" /><path d="M7 6l4-2 5 3-4 2zM13 13l4-2 5 3-4 2z" fill="#666" /><path d="M2 4l4-2 5 3-4 2zM19 20l4-2v3l-4 3z" fill="#777" /></>,
  deco: <><path d="M1 16L14 3h9v10L11 24H1z" fill="#ccc" /><path d="M1 16h10L23 5" stroke="#999" fill="none" /><path d="M4 19h3M9 19h3M3 22h3M8 22h3M13 17h3M18 13h3" stroke="#666" strokeWidth="2" /></>,
};
const NavIc = ({ n }) => <Svg vb="0 0 24 26" w={24} h={26}>{navIcon[n]}</Svg>;

const treeRows = [
  ["所有构件", 0, "part", "off"], ["施工段", 1, "part", "off"],
  ["土方工程", 2, "off", "off"], ["基础工程", 2, "off", "off"], ["主体结构", 2, "off", "off"],
  ["二次结构", 2, "off", "off"], ["装饰装修", 2, "off", "off"], ["外墙工程", 2, "off", "off"],
  ["其它土建", 2, "off", "off"], ["钢筋工程", 2, "on", "off"],
  ["轴线", 1, "on", "dis"], ["轴网", 2, "on", "dis"], ["辅助轴线", 2, "on", "dis"],
  ["柱", 1, "part", "off"], ["柱", 2, "on", "off"], ["构造柱", 2, "on", "off"], ["砌体柱", 2, "off", "off"], ["约束边缘非阴...", 2, "on", "off"],
  ["墙", 1, "part", "off"], ["剪力墙", 2, "on", "off"], ["人防门框墙", 2, "on", "off"], ["砌体墙", 2, "on", "off"],
  ["砌体加筋", 2, "off", "off"], ["保温墙", 2, "off", "off"], ["暗梁", 2, "off", "off"], ["墙垛", 2, "off", "off"], ["幕墙", 2, "on", "off"],
  ["门窗洞", 1, "off", "off"], ["门", 2, "off", "off"], ["窗", 2, "off", "off"], ["门联窗", 2, "off", "off"], ["墙洞", 2, "off", "off"], ["带形窗", 2, "off", "off"], ["带形洞", 2, "off", "off"],
];

const props = [
  ["名称", "C10-150", true, false],
  ["类别", "底筋", false, true],
  ["钢筋信息", "10@150", true, true],
  ["左弯折(mm)", "(0)", false, true],
  ["右弯折(mm)", "(0)", false, true],
  ["备注", "", false, true],
];

const Tick = () => (
  <Svg s={11} stroke="#fff" sw={2.400}>
    <path d="M2 8.500l4 4 8-9" />
  </Svg>
);

const Radio = ({ on, t }) => (
  <RadioWrap>
    <RadioDot $on={on} />
    {t}
  </RadioWrap>
);

const Nb = ({ t, i, on, children }) => (
  <NavRow $on={on}>
    <NavIc n={i} />
    {t}
    {children}
  </NavRow>
);

const Sel = ({ t }) => (
  <SelCell>
    {t}
    <Caret $c="#555" />
  </SelCell>
);

const TrayIc = ({ children }) => <TraySlot>{children}</TraySlot>;

export default function App() {
  return (
    <Shell>
      <Global />
      <TitleBar>
        <Quick>
          {quickIcons.map((q, i) => (
            <QuickSlot key={i}>{q}</QuickSlot>
          ))}
        </Quick>
        <span>广联达BIM土建计量平台 GTJ2025 - [C:\Users\Administrator\Desktop\图形文件\硫铵工程.GTJ]</span>
        <WinBtns>
          <Svg s={11} stroke="#999"><path d="M3 9h9" strokeWidth="2" /></Svg>
          <Svg s={11} stroke="#999"><path d="M1 5h9v10H1zM5 5V1h10v9h-5" strokeWidth="1.500" /></Svg>
          <Svg s={11} stroke="#999"><path d="M2 2l12 12M14 2L2 14" strokeWidth="1.500" /></Svg>
        </WinBtns>
      </TitleBar>

      <MenuBar>
        {["开始", "工程设置", "建模", "工程量", "视图", "工具", "云应用", "算量协作", "IGMS"].map((m) => (
          <MenuItem key={m} $on={m === "建模"}>{m}</MenuItem>
        ))}
        <AskWrap>
          <AskBox>
            <AskText><span>楼层三维显示图元/轴网有错位，位置不对应如何处理 ？</span></AskText>
            <Svg s={12} stroke="#aaa" sw={1.500}><circle cx="7" cy="7" r="5" /><path d="M11 11l3 3" /></Svg>
          </AskBox>
          <Avatar><Svg s={16} fill="#fff"><circle cx="8" cy="6" r="3.500" /><path d="M2 16c0-4 3-5 6-5s6 1 6 5z" /></Svg></Avatar>
          <UserName>杨华</UserName>
          <HelpIcons>
            <Svg s={16} stroke="#555"><path d="M2 10V7a6 6 0 0 1 12 0v3M11 14c2 0 3-1 3-3" /><rect x="1" y="8" width="2" height="4" rx="1" /><rect x="13" y="8" width="2" height="4" rx="1" /></Svg>
            <Svg s={17} stroke="#555"><path d="M8 2a6.500 6 0 1 0 0 11l-3 2.500V12" /><path d="M5 8h.500M8 8h.500M11 8h.500" strokeWidth="1.500" /><circle cx="13" cy="3.500" r="2.500" stroke={BL} /></Svg>
            <span style={{ display: "flex", alignItems: "center", width: 14, fontSize: 14, color: "#555" }}>?<Caret $ml={1} /></span>
            <Svg s={16} stroke="#555"><path d="M5 2L1 5l2 3 2-1v7h6V7l2 1 2-3-4-3c-1 2-5 2-6 0z" /></Svg>
            <Svg s={14} stroke="#555" sw={1.300}><path d="M1 11l7-7 7 7" /></Svg>
          </HelpIcons>
        </AskWrap>
      </MenuBar>

      <Ribbon>
        <Group $w={233}>
          <GroupBody>
            <BigBtn $w={54}>
              <BigIcon><Svg vb="0 0 22 28" w={22} h={30}><path d="M2 2l18 18H9l-7 7z" fill="#cfe2fb" stroke={BL} strokeWidth="2" /></Svg></BigIcon>
              选择
            </BigBtn>
            <Col $w={99}>
              <Ri i="pick" t="拾取构件" />
              <Ri i="batch" t="批量选择" />
              <Ri i="attr" t="按属性选择" m />
            </Col>
            <Col $w={70}>
              <Ri i="find" t="查找图元" />
              <Ri i="filter" t="过滤图元" off />
            </Col>
          </GroupBody>
          <GroupLabel>选择</GroupLabel>
        </Group>
        <Group $w={194}>
          <GroupBody $pl={8}>
            <Col $w={81}>
              <Ri i="scale" t="设置比例" off />
              <Ri i="replace" t="查找替换" off />
              <Ri i="restore" t="还原CAD" off />
            </Col>
            <Col $w={100}>
              <Ri i="floorTbl" t="识别楼层表" off />
              <Ri i="cadOpt" t="CAD识别选项" />
            </Col>
          </GroupBody>
          <GroupLabel>图纸操作<Caret /></GroupLabel>
        </Group>
        <Group $w={276}>
          <GroupBody $pl={8}>
            <Col $w={68}>
              <Ri i="define" t="定义" />
              <Ri i="cloud" t="云检查" />
              <Ri i="lock" t="锁定" m />
            </Col>
            <Col $w={110}>
              <Ri i="copyLayer" t="复制到其它层" m />
              <Ri i="align" t="自动平齐顶板" off m />
              <Ri i="store" t="图元存盘" m />
            </Col>
            <Col $w={80}>
              <Ri i="axis2" t="两点辅轴" m />
              <Ri i="dim" t="长度标注" m />
              <Ri i="convert" t="转换图元" />
            </Col>
          </GroupBody>
          <GroupLabel>通用操作<Caret /></GroupLabel>
        </Group>
        <Group $w={236}>
          <GroupBody $pl={10}>
            <Col $w={54}>
              <Ri i="del" t="删除" />
              <Ri i="copy" t="复制" />
              <Ri i="move" t="移动" />
            </Col>
            <Col $w={54}>
              <Ri i="rotate" t="旋转" />
              <Ri i="mirror" t="镜像" />
              <Ri i="extend" t="延伸" off />
            </Col>
            <Col $w={63}>
              <Ri i="trim" t="修剪" off />
              <Ri i="alignR" t="对齐" off m />
              <Ri i="brk" t="打断" off />
            </Col>
            <Col $w={48}>
              <Ri i="offset" t="偏移" />
              <Ri i="merge" t="合并" off />
              <Ri i="split" t="分割" off />
            </Col>
          </GroupBody>
          <GroupLabel>修改<Caret /></GroupLabel>
        </Group>
        <Group $w={69}>
          <GroupBody>
            <DrawGrid>
              <DrawCell><Svg>{icons.point}</Svg></DrawCell>
              <DrawCell><Svg>{icons.measure}</Svg></DrawCell>
              <DrawCell $on><Svg>{icons.line}</Svg></DrawCell>
              <DrawCell><Svg>{icons.rect}</Svg></DrawCell>
              <DrawCell><Svg>{icons.arc}</Svg><Caret $ml={1} /></DrawCell>
            </DrawGrid>
          </GroupBody>
          <GroupLabel $pl={3}>绘图</GroupLabel>
        </Group>
        <Group $w={164}>
          <GroupBody $pl={3}>
            <BigBtn $w={75} $off>
              <BigIcon>
                <Svg s={32} stroke={GR} sw={1.200}><path d="M11 14.500H2.500V1.500h11V7" /><path d="M5 6h5a2 2 0 0 1-2 3h-3M8 4v6" /><circle cx="11.500" cy="11.500" r="2.500" /><path d="M13.500 13.500l1.500 1.500" /></Svg>
              </BigIcon>
              识别受力筋
            </BigBtn>
            <BigBtn $w={76} $off>
              <BigIcon>
                <Svg s={32} stroke={GR} sw={1.200}><path d="M9 14.500H2.500a1 1 0 0 1-1-1v-11a1 1 0 0 1 1-1h11a1 1 0 0 1 1 1V8M1.500 6h13M7 1.500V14.500M10 1.500V6" /><path d="M9.500 11.500l2 2 3-4" /></Svg>
              </BigIcon>
              校核板筋图元
            </BigBtn>
          </GroupBody>
          <GroupLabel>识别板受力筋</GroupLabel>
        </Group>
        <Group $w={286}>
          <GroupBody $pl={6}>
            <BigBtn $w={68} $mr={6} $on>
              <BigIcon>
                <Svg s={34} stroke={DK} sw={1}><path d="M10 14.500H3a1 1 0 0 1-1-1V1.500h12V7" /><path d="M5 6h5.500a2 2 0 0 1-2 3.500H5.500M8 3.500v6" stroke={BL} /><circle cx="12" cy="11.500" r="3" stroke={BL} /><circle cx="12" cy="11.500" r="1" stroke={BL} /></Svg>
              </BigIcon>
              布置受力筋
            </BigBtn>
            <Col $w={101}>
              <Ri i="exch" t="交换标注" />
              <Ri i="chk" t="查改标注" />
              <Ri i="viewInfo" t="查看布筋范围" />
            </Col>
            <Col $w={100}>
              <Ri i="view" t="查看布筋情况" />
              <Ri i="copyRebar" t="复制钢筋" />
              <Ri i="apply" t="应用同名板" />
            </Col>
          </GroupBody>
          <GroupLabel>板受力筋二次编辑</GroupLabel>
        </Group>
      </Ribbon>

      <OptionBar>
        {["硫铵厂房工程", "首层", "板", "板受力筋", "C10-150", "分层板1"].map((s) => <Sel key={s} t={s} />)}
        <OptGap />
        <Radio t="单板" />
        <Radio t="多板" />
        <Radio on t="自定义" />
        <Radio t="按受力筋范围" />
        <VSep />
        <Radio t="XY  方向" />
        <Radio on t="水平" />
        <Radio t="垂直" />
        <Radio t="两点" />
        <Radio t="平行边" />
        <Radio t="弧线边布置放射筋" />
        <Radio t="圆心布置放射筋" />
        <OffsetSel>不偏移<Caret $c="#555" /></OffsetSel>
        <CoordLabel>X=</CoordLabel>
        <CoordInput>0<Spin><SpinUp /><Caret $c="#666" $ml={0} /></Spin></CoordInput>
        <Unit>mm</Unit>
        <CoordLabel>Y=</CoordLabel>
        <CoordInput>0<Spin><SpinUp /><Caret $c="#666" $ml={0} /></Spin></CoordInput>
        <Unit>mm</Unit>
      </OptionBar>

      <Main>
        <NavPanel>
          <PanelHead>
            <Grip />
            导航栏
            <PanelClose><CloseX /></PanelClose>
          </PanelHead>
          {navTop.map(([t, i]) => <Nb key={t} t={t} i={i} />)}
          <Nb t="板" i="slab" on />
          <NavSub $first>现浇板(B)</NavSub>
          {["螺旋板(B)", "坡道(PD)", "柱帽(V)", "板洞(N)"].map((t) => <NavSub key={t}>{t}</NavSub>)}
          <NavSub $on>板受力筋(S)</NavSub>
          {["板负筋(F)", "楼层板带(H)"].map((t) => <NavSub key={t}>{t}</NavSub>)}
          <NavSub $last>板加腋(B)</NavSub>
          <Nb t="装配式" i="fab">
            <NavLock><Svg s={13} stroke="#666"><path d="M5 7V4a3 3 0 0 1 6 0v3M3 7h10v8H3zM8 10v2" /></Svg></NavLock>
            <FreeBadge>免费体验</FreeBadge>
          </Nb>
          <Nb t="楼梯" i="stair" />
          <NavSub>楼梯(R)</NavSub>
          {["直形梯段(R)", "螺旋梯段(R)", "楼梯井(R)"].map((t) => <NavSub key={t}>{t}</NavSub>)}
          <Nb t="装修" i="deco" />
          <NavRow><FreeBadge $top={5} /></NavRow>
          <NavScroll />
        </NavPanel>

        <MidCol>
          <MidPanel $h={377}>
            <TabHead>
              <Grip />
              <PanelTab $on>构件列表</PanelTab>
              <PanelTab>图纸管理</PanelTab>
              <PanelClose><CloseX /></PanelClose>
            </TabHead>
            <Tools>
              <ToolBtn $w={45}><Svg stroke={DK}><path d="M3 4v10h11V5l-3-3H6" /><rect x="1" y="1" width="3" height="3" fill={BL} stroke="none" /></Svg><Caret $c="#999" $ml={3} /></ToolBtn>
              <ToolBtn><Svg>{icons.copy}</Svg></ToolBtn>
              <ToolBtn><Svg>{icons.del}</Svg></ToolBtn>
              <ToolBtn><Svg stroke={DK}><rect x="1.500" y="6.500" width="7.500" height="7.500" rx="1" /><rect x="3.500" y="4.500" width="8" height="8" rx="1" /><rect x="6" y="1.500" width="8.500" height="8.500" rx="1" fill={LB} stroke={BL} /></Svg></ToolBtn>
              <ToolBtn $w={25} $ml={41} $bd><Svg s={9} fill="#777"><path d="M2 3l5 5-5 5zM9 3l5 5-5 5z" /></Svg></ToolBtn>
            </Tools>
            <SearchBox>
              搜索构件...
              <Svg s={12} stroke="#aaa" sw={1.500}><circle cx="7" cy="7" r="5" /><path d="M11 11l3 3" /></Svg>
            </SearchBox>
            <CompList>
              <CompItem>{"C8-150  <9>"}</CompItem>
              <CompItem $on>{"C10-150  <16>"}</CompItem>
              <CompItem>{"C8-200  <1>"}</CompItem>
            </CompList>
          </MidPanel>
          <MidPanel>
            <TabHead>
              <Grip />
              <PanelTab $on>属性列表</PanelTab>
              <PanelTab>图层管理</PanelTab>
              <PanelClose><CloseX /></PanelClose>
            </TabHead>
            <SecRow><SecTri $open />基础属性<SecAdd>附加</SecAdd></SecRow>
            <PropGrid>
              {props.map(([k, v, blue, dot]) => (
                <PropRow key={k} $blue={blue}>
                  {k}
                  <PropInput>{k === "钢筋信息" && <Grade>Φ</Grade>}{v}</PropInput>
                  {dot && <PropDot />}
                </PropRow>
              ))}
            </PropGrid>
            <SecRow><SecTri />钢筋业务属性<SecAdd>附加</SecAdd></SecRow>
            <SecRow><SecTri />显示样式<SecAdd>附加</SecAdd></SecRow>
          </MidPanel>
        </MidCol>

        <Canvas>
          <CanvasDrawing />
          <CoordBox $x={444} $w={46} $sel><CoordSel>51925</CoordSel></CoordBox>
          <CoordBox $x={524} $w={62}>Y:38528</CoordBox>
          <Handle><Svg s={10} stroke="#999" sw={1.500}><path d="M11 2L5 8l6 6" /></Svg></Handle>
          <Handle $right><Svg s={10} stroke="#999" sw={1.500}><path d="M5 2l6 6-6 6" /></Svg></Handle>
          <ViewBar>
            {viewIcons.map((v, i) =>
              v === "a" ? <ViewArrow key={i}><Caret $c="#555" $ml={0} /></ViewArrow> : v === "r" ? <ViewRule key={i} /> : v
            )}
          </ViewBar>
        </Canvas>

        <RightPanel>
          <PanelHead $gap={3}>
            <Grip />
            <span style={{ marginLeft: 1 }}>显示设置</span>
            <PanelClose><CloseX /></PanelClose>
          </PanelHead>
          <ShowTabs>
            <ShowTab $on>图元显示</ShowTab>
            <ShowTab>楼层显示</ShowTab>
          </ShowTabs>
          <TreeBox>
            <TreeRow>
              <TreeHead>图层构件</TreeHead>
              <TreeHead>显示图元</TreeHead>
              <TreeHead>显示名称</TreeHead>
            </TreeRow>
            {treeRows.map(([t, lv, a, b], i) => (
              <TreeRow key={i}>
                <NameCell $lv={lv}>
                  {lv < 2 && <Expander $lv={lv} />}
                  {t}
                </NameCell>
                <BoxCell><Check $s={a}>{a === "on" && <Tick />}</Check></BoxCell>
                <BoxCell><Check $s={b} /></BoxCell>
              </TreeRow>
            ))}
            <TreeScroll />
          </TreeBox>
          <ResetRow><ResetBtn>恢复默认设置</ResetBtn></ResetRow>
        </RightPanel>
      </Main>

      <StatusBar>
        <StatText $w={92} $pl={2}>层高： 6.4</StatText>
        <StatText $w={140}>标高： 0~6.4</StatText>
        <StatText $w={110}>选中图元：0</StatText>
        <StatText $w={110}>隐藏图元：0</StatText>
        <StatBtn $mr={4}><Svg s={14} stroke="#555"><path d="M3 2v11h11M3 8h4v5" /></Svg></StatBtn>
        <StatBtn $w={36} $on><Svg s={15} stroke="#555"><rect x="2" y="2" width="12" height="12" rx="2" /></Svg><Caret $c="#555" $ml={0} /></StatBtn>
        <StatBtn $mr={7}><Svg s={14} stroke="#555"><path d="M2 2l12 12M14 2L2 14" /></Svg></StatBtn>
        <StatBtn $w={36} $mr={3} $on><Svg s={15} stroke="#777"><path d="M2 13h12M2 13l8-10" /></Svg><Caret $c="#555" $ml={0} /></StatBtn>
        <StatBtn $w={36} $mr={4} $on><Svg s={15} stroke={DK}><path d="M3 1v6M0 4h6" /><rect x="7" y="10" width="7" height="3" fill={BL} stroke="none" /><path d="M1 12h4" /></Svg><Caret $c="#555" $ml={0} /></StatBtn>
        <StatBtn $mr={3}><Svg s={15} stroke="#444"><path d="M3 2h9v10H3z" fill="#555" /><path d="M3 14h9" /></Svg></StatBtn>
        <StatBtn $mr={16}><Svg s={14} stroke="#888"><path d="M2 14V8c0-3 3-5 7-6M9 8l3 5H8z" /></Svg></StatBtn>
        <Svg s={15} stroke="#444"><path d="M2 14L14 2M8 2h6v6M2 8v6h6" /></Svg>
        <StatText $w={320} $pl={4}>按鼠标左键布置钢筋,按右键中止或 ESC 取消</StatText>
        <Warn>!</Warn>
        <CheckMsg>合法性检查存在</CheckMsg>
        <ImeBar>
          <ImeLogo>
            <Svg vb="0 0 30 30" s={30}>
              <path d="M4 3l25-2-2 24-25 3z" fill="#ef4a16" />
              <path d="M22 9H12c-3 0-3 5 0 5h6c3 0 3 6 0 6H7" fill="none" stroke="#fff" strokeWidth="3.500" />
            </Svg>
          </ImeLogo>
          <ImeSlot>中</ImeSlot>
          <ImeSlot><Svg s={16} fill="#1776d6"><circle cx="4" cy="6" r="2" fill="none" stroke="#1776d6" /><path d="M11 9h2.500l-1 5-2 .500z" /></Svg></ImeSlot>
          <ImeSlot><Svg s={18} fill="#1776d6"><rect x="5" y="1" width="6" height="9" rx="3" /><path d="M3 7a5 5 0 0 0 10 0M8 12v3M5 15.500h6" fill="none" stroke="#1776d6" /></Svg></ImeSlot>
          <ImeSlot><Svg s={16} fill="#1776d6"><rect x="1" y="3" width="14" height="10" rx="1" /><path d="M3 6h10M3 8.500h10M5 11h6" stroke="#fff" strokeDasharray="1.500 1" /></Svg></ImeSlot>
          <ImeSlot><Svg s={18} fill="#1776d6"><path d="M5 1L1 4l2 3 2-1v9h6V6l2 1 2-3-4-3-3 2z" /></Svg></ImeSlot>
          <ImeSlot><Svg s={18} fill="#1776d6"><rect x="1" y="5" width="14" height="9" rx="4.500" /><path d="M8 5V2" stroke="#1776d6" /><circle cx="5" cy="9.500" r="1.300" fill="#fff" /><circle cx="11" cy="9.500" r="1.300" fill="#fff" /></Svg></ImeSlot>
          <ImeSlot><Svg s={16} fill="#1776d6"><rect x="1" y="1" width="6" height="6" rx="2" /><rect x="9" y="1" width="6" height="6" rx="2" /><rect x="1" y="9" width="6" height="6" rx="2" /><rect x="9" y="9" width="6" height="6" rx="2" /></Svg></ImeSlot>
          <ImeSlot><Svg s={16} fill="#8a6fe0"><path d="M8 1l2 4 5 1-3 4 1 5-5-2-5 2 1-5-3-4 5-1z" /></Svg></ImeSlot>
        </ImeBar>
      </StatusBar>

      <Taskbar>
        <Orb>
          <Svg vb="0 0 20 20" s={24}>
            <path d="M2 4c3-1 5-1 7 0v6c-2-1-4-1-7 0z" fill="#e8502a" />
            <path d="M10 4c2 1 5 1 8 0v6c-3 1-6 1-8 0z" fill="#7cbb3e" />
            <path d="M2 11c3-1 5-1 7 0v6c-2-1-4-1-7 0z" fill="#3da3e8" />
            <path d="M10 11c2 1 5 1 8 0v6c-3 1-6 1-8 0z" fill="#f4c21f" />
          </Svg>
        </Orb>
        <Dots />
        <TaskBtn><Svg vb="0 0 32 32" s={32}><path d="M22 6C12 2 4 9 5 18c1 9 12 12 17 7 5-5 2-11-4-11-4 0-5 4-2 6" fill="none" stroke="#2b8fee" strokeWidth="5" /></Svg></TaskBtn>
        <TaskBtn><Svg vb="0 0 32 32" s={32}><path d="M3 8h9l2 2h15v18H3z" fill="#f3d98c" /><rect x="3" y="5" width="10" height="4" fill="#f8e9b6" /><rect x="5" y="3" width="3" height="2" fill="#4caf50" /><rect x="19" y="6" width="3" height="2" fill="#d33" /><path d="M8 27v-7h16v7M11 20v-3h10v3" fill="none" stroke="#4aa3e0" strokeWidth="2" /></Svg></TaskBtn>
        <TaskBtn><PreSquare>预</PreSquare></TaskBtn>
        <TaskBtn><Svg vb="0 0 32 32" s={32}><circle cx="16" cy="16" r="13" fill="#fff" stroke="#5cc22f" strokeWidth="3" /><path d="M8 16h16M9 10c4-5 12-5 15 0M9 22c4 5 12 5 15 0" fill="none" stroke="#41a62a" strokeWidth="3" /></Svg></TaskBtn>
        <TaskBtn $on><Svg vb="0 0 32 32" s={32}><rect x="1" y="1" width="30" height="30" rx="6" fill="#2d7ff0" /><path d="M6 11l18-5-3 6-5 1v14l-4-4V13z" fill="#fff" /></Svg></TaskBtn>
        <Tray>
          <Dots $ml={0} $mr={2} />
          <TrayIc><Svg vb="0 0 20 20" s={20}><path d="M3 2l15-1-1 16-15 2z" fill="#ef4a16" /><path d="M13 6H8c-2 0-2 3 0 3h3c2 0 2 4 0 4H6" fill="none" stroke="#fff" strokeWidth="2" /></Svg></TrayIc>
          <TrayIc><Svg vb="0 0 20 20" s={20}><ellipse cx="10" cy="10" rx="7" ry="9" fill="#1b3f8f" stroke="#ccd" /><path d="M8 8c0-3 5-3 4 0-1 2-2 2-2 4M10 14v1" fill="none" stroke="#fff" /></Svg></TrayIc>
          <TrayIc><Svg s={14} stroke="#fff"><path d="M4 2h9v5H9M2 6h7v5H2z" /><path d="M5 13h6l-3 2.500z" fill="#fff" stroke="none" /></Svg></TrayIc>
          <TrayIc><Svg vb="0 0 20 20" s={20}><path d="M15 4C9 1 4 5 5 11c1 6 8 7 10 3 1-3-2-5-5-3" fill="none" stroke="#1f98ec" strokeWidth="3" /></Svg></TrayIc>
          <TrayIc><Svg vb="0 0 20 20" s={20}><circle cx="10" cy="10" r="8" fill="#fff" stroke="#59c02c" strokeWidth="2" /><path d="M5 10h10M6 6c2-3 6-3 8 0M6 14c2 3 6 3 8 0" fill="none" stroke="#41a62a" strokeWidth="2" /></Svg></TrayIc>
          <TrayIc><Svg vb="0 0 20 20" s={20}><rect x="2" y="2" width="16" height="16" rx="3" fill="#f5a71c" /><path d="M5 14c3 0 3-8 6-8s1 8 4 6" fill="none" stroke="#fff" strokeWidth="2" /></Svg></TrayIc>
          <TrayIc><Svg vb="0 0 20 20" s={20}><rect x="2" y="2" width="16" height="16" fill="#fff" /><path d="M5 12L10 4l5 8" fill="none" stroke="#1f7de0" strokeWidth="2" /><rect x="4" y="13" width="12" height="4" fill="#ee7a1f" /></Svg></TrayIc>
          <TrayIc><Svg vb="0 0 20 20" s={20}><rect x="4" y="1" width="6" height="13" fill="#888" /><circle cx="13" cy="14" r="5" fill="#2c9a3a" /><path d="M11 14l2 2 3-4" fill="none" stroke="#fff" strokeWidth="1.500" /></Svg></TrayIc>
          <TrayIc><Svg vb="0 0 20 20" s={20}><circle cx="10" cy="10" r="8" fill="#f0c81a" stroke="#3c8a2a" strokeWidth="2" /><path d="M10 5v10M5 10h10" stroke="#256a15" strokeWidth="2.500" /></Svg></TrayIc>
          <TrayIc><Svg vb="0 0 20 20" s={20}><path d="M2 7h4l5-5v16l-5-5H2z" fill="#ee8a6a" stroke="#a33" /><path d="M14 6c2 3 2 6 0 8" fill="none" stroke="#a33" /></Svg></TrayIc>
          <TrayIc><Svg s={16} fill="#fff"><path d="M2 12h2v3H2zM5.500 10h2v5h-2zM9 7h2v8H9zM12.500 3h2v12h-2z" /></Svg></TrayIc>
          <TrayIc><Svg vb="0 0 20 20" s={20} fill="#eee"><path d="M3 7h3l5-5v16l-5-5H3z" /><path d="M13 7c1.500 2 1.500 4 0 6M15 5c3 3 3 7 0 10" fill="none" stroke="#eee" /></Svg></TrayIc>
          <Clock>
            <div>14:49 周三</div>
            <div>2024/3/20</div>
            <ClockBadge>1</ClockBadge>
          </Clock>
          <DeskBtn><Svg s={9} fill="#000"><path d="M4 2l9 6-9 6z" /></Svg></DeskBtn>
          <Peek />
        </Tray>
      </Taskbar>
    </Shell>
  );
}
